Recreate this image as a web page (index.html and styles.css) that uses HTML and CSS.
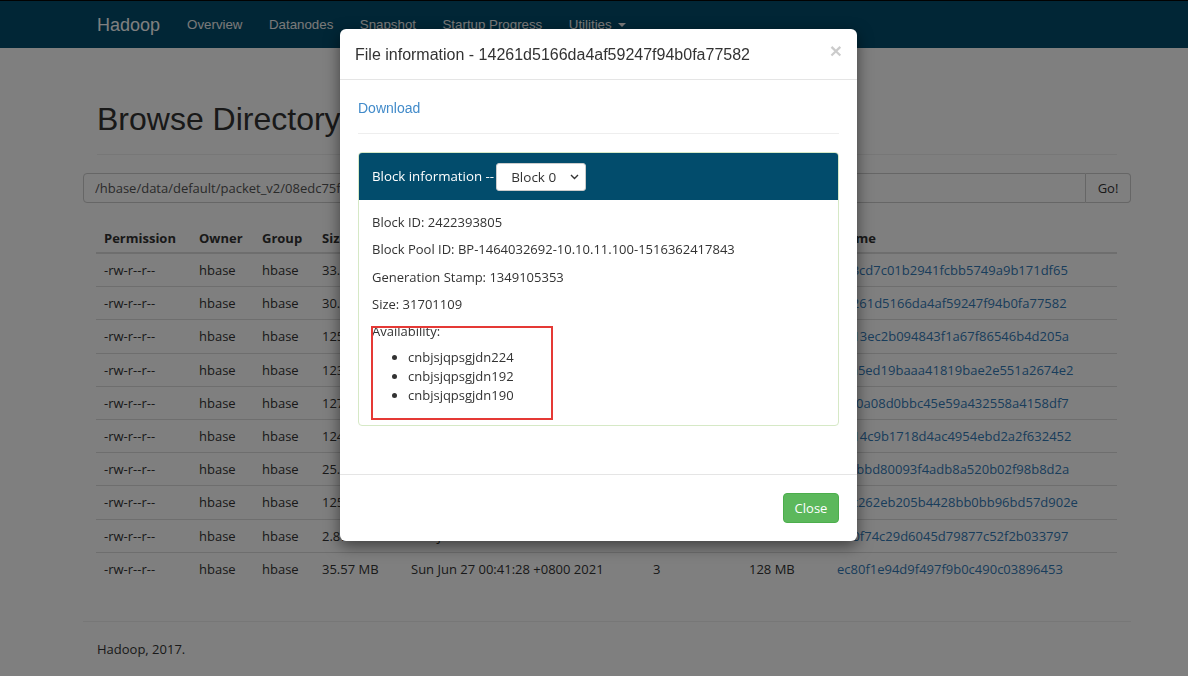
FILE: index.html
```html
<!DOCTYPE html>
<html lang="en">
<head>
<meta charset="utf-8">
<title>Browsing HDFS</title>
<link rel="stylesheet" href="styles.css">
</head>
<body>
<nav class="navbar">
  <div class="nav-inner">
    <a class="brand" href="#">Hadoop</a>
    <ul class="nav-links">
      <li><a href="#">Overview</a></li>
      <li><a href="#">Datanodes</a></li>
      <li><a href="#">Snapshot</a></li>
      <li><a href="#">Startup Progress</a></li>
      <li><a href="#">Utilities <span class="caret"></span></a></li>
    </ul>
  </div>
</nav>

<main class="container">
  <div class="page-header">
    <h1>Browse Directory</h1>
  </div>

  <form class="input-group">
    <input class="path-input" type="text" value="/hbase/data/default/packet_v2/08edc75f3a1d2b4c/d">
    <button class="go-btn" type="button">Go!</button>
  </form>

  <table class="listing">
    <colgroup>
      <col class="c-perm"><col class="c-owner"><col class="c-group"><col class="c-size">
      <col class="c-date"><col class="c-repl"><col class="c-bsize"><col class="c-name">
    </colgroup>
    <thead>
      <tr><th>Permission</th><th>Owner</th><th>Group</th><th>Size</th><th>Last Modified</th><th>Replication</th><th>Block Size</th><th>Name</th></tr>
    </thead>
    <tbody>
      <tr><td>-rw-r--r--</td><td>hbase</td><td>hbase</td><td>33.21 MB</td><td>Sun Jun 27 00:40:12 +0800 2021</td><td>3</td><td>128 MB</td><td><a href="#">0a3cd7c01b2941fcbb5749a9b171df65</a></td></tr>
      <tr><td>-rw-r--r--</td><td>hbase</td><td>hbase</td><td>30.23 MB</td><td>Sun Jun 27 00:40:19 +0800 2021</td><td>3</td><td>128 MB</td><td><a href="#">14261d5166da4af59247f94b0fa77582</a></td></tr>
      <tr><td>-rw-r--r--</td><td>hbase</td><td>hbase</td><td>125.43 MB</td><td>Sun Jun 27 00:40:33 +0800 2021</td><td>3</td><td>128 MB</td><td><a href="#">7b13ec2b094843f1a67f86546b4d205a</a></td></tr>
      <tr><td>-rw-r--r--</td><td>hbase</td><td>hbase</td><td>123.8 MB</td><td>Sun Jun 27 00:40:41 +0800 2021</td><td>3</td><td>128 MB</td><td><a href="#">c8a5ed19baaa41819bae2e551a2674e2</a></td></tr>
      <tr><td>-rw-r--r--</td><td>hbase</td><td>hbase</td><td>127.12 MB</td><td>Sun Jun 27 00:40:52 +0800 2021</td><td>3</td><td>128 MB</td><td><a href="#">e9f0a08d0bbc45e59a432558a4158df7</a></td></tr>
      <tr><td>-rw-r--r--</td><td>hbase</td><td>hbase</td><td>124.6 MB</td><td>Sun Jun 27 00:41:01 +0800 2021</td><td>3</td><td>128 MB</td><td><a href="#">3d14c9b1718d4ac4954ebd2a2f632452</a></td></tr>
      <tr><td>-rw-r--r--</td><td>hbase</td><td>hbase</td><td>25.34 MB</td><td>Sun Jun 27 00:41:08 +0800 2021</td><td>3</td><td>128 MB</td><td><a href="#">6f2bbd80093f4adb8a520b02f98b8d2a</a></td></tr>
      <tr><td>-rw-r--r--</td><td>hbase</td><td>hbase</td><td>125.9 MB</td><td>Sun Jun 27 00:41:15 +0800 2021</td><td>3</td><td>128 MB</td><td><a href="#">a1c262eb205b4428bb0bb96bd57d902e</a></td></tr>
      <tr><td>-rw-r--r--</td><td>hbase</td><td>hbase</td><td>2.87 MB</td><td>Sun Jun 27 00:41:21 +0800 2021</td><td>3</td><td>128 MB</td><td><a href="#">5b0f74c29d6045d79877c52f2b033797</a></td></tr>
      <tr><td>-rw-r--r--</td><td>hbase</td><td>hbase</td><td>35.57 MB</td><td>Sun Jun 27 00:41:28 +0800 2021</td><td>3</td><td>128 MB</td><td><a href="#">ec80f1e94d9f497f9b0c490c03896453</a></td></tr>
    </tbody>
  </table>

  <footer class="footer">
    <p>Hadoop, 2017.</p>
  </footer>
</main>

<div class="backdrop"></div>

<div class="modal">
  <div class="modal-header">
    <span class="close">&times;</span>
    <h4 class="modal-title">File information - 14261d5166da4af59247f94b0fa77582</h4>
  </div>
  <div class="modal-body">
    <a class="download" href="#">Download</a>
    <hr class="sep">
    <div class="panel">
      <div class="panel-heading">
        <span class="panel-title">Block information --</span>
        <span class="block-select">Block 0
          <svg class="chev" width="9" height="6" viewBox="0 0 9 6"><polyline points="1,1 4.5,4.5 8,1" fill="none" stroke="#333" stroke-width="1.4"/></svg>
        </span>
      </div>
      <div class="panel-body">
        <p>Block ID: 2422393805</p>
        <p>Block Pool ID: BP-1464032692-10.10.11.100-1516362417843</p>
        <p>Generation Stamp: 1349105353</p>
        <p>Size: 31701109</p>
        <p class="avail">Availability:</p>
        <ul class="nodes">
          <li>cnbjsjqpsgjdn224</li>
          <li>cnbjsjqpsgjdn192</li>
          <li>cnbjsjqpsgjdn190</li>
        </ul>
        <div class="highlight"></div>
      </div>
    </div>
  </div>
  <div class="modal-footer">
    <button class="btn-close" type="button">Close</button>
  </div>
</div>
</body>
</html>
```

FILE: styles.css
```css
* { box-sizing: border-box; }

html, body {
  margin: 0;
  padding: 0;
  background: #fff;
  color: #333;
  font-family: "Open Sans", "Noto Sans", sans-serif;
  font-size: 13px;
}

a { color: #337ab7; text-decoration: none; }

/* navbar */
.navbar {
  height: 48px;
  background: #024c6c;
  border-top: 1px solid #050505;
}
.nav-inner {
  margin-left: 83px;
  width: 1048px;
  padding: 0 14px;
  height: 47px;
  display: flex;
  align-items: center;
  gap: 27px;
  font-family: "Liberation Sans", Arial, sans-serif;
}
.brand {
  color: #fff;
  font-size: 18px;
  line-height: 20px;
}
.nav-links {
  list-style: none;
  margin: 0;
  padding: 0;
  display: flex;
  gap: 26.5px;
}
.nav-links a {
  color: #f2f2f2;
  font-size: 13.3px;
  line-height: 20px;
}
.caret {
  display: inline-block;
  width: 0;
  height: 0;
  margin-left: 3px;
  vertical-align: middle;
  border-top: 4px solid #f2f2f2;
  border-left: 4px solid transparent;
  border-right: 4px solid transparent;
}

/* main */
.container {
  margin-left: 83px;
  width: 1048px;
}
.page-header {
  margin: 51px 14px 0;
  padding-bottom: 15px;
  border-bottom: 1px solid #eee;
}
.page-header h1 {
  margin: 0;
  font-family: "Liberation Sans", Arial, sans-serif;
  font-weight: 400;
  font-size: 32px;
  line-height: 40px;
  color: #333;
}

.input-group {
  margin-top: 18px;
  display: flex;
  height: 30px;
}
.path-input {
  flex: 1;
  height: 30px;
  border: 1px solid #ccc;
  border-radius: 4px 0 0 4px;
  padding: 0 11px;
  font-family: "Open Sans", sans-serif;
  font-size: 13px;
  color: #555;
  background: #fff;
}
.go-btn {
  width: 45px;
  height: 30px;
  border: 1px solid #ccc;
  border-left: none;
  border-radius: 0 4px 4px 0;
  background: #fff;
  color: #333;
  font-family: "Open Sans", sans-serif;
  font-size: 13px;
  padding: 0;
}

.listing {
  margin: 17px 0 0 13px;
  width: 1021px;
  border-collapse: collapse;
  table-layout: fixed;
}
.c-perm { width: 95px; }
.c-owner { width: 63px; }
.c-group { width: 60px; }
.c-size { width: 89px; }
.c-date { width: 242px; }
.c-repl { width: 96px; }
.c-bsize { width: 88px; }
.c-name { width: 288px; }
.listing th {
  text-align: left;
  font-weight: 700;
  padding: 10px 8px 6px;
  line-height: 16px;
  border-bottom: 2px solid #ddd;
  white-space: nowrap;
  overflow: hidden;
}
.listing td {
  padding: 8px 8px;
  line-height: 16.2px;
  border-top: 1px solid #ddd;
  white-space: nowrap;
}
.listing tbody tr:first-child td { border-top: none; }

.footer {
  margin-top: 36px;
  border-top: 1px solid #eee;
  padding: 19px 14px;
}
.footer p { margin: 0; line-height: 17px; }

/* backdrop + modal */
.backdrop {
  position: fixed;
  inset: 0;
  background: rgba(0, 0, 0, 0.5);
}
.modal {
  position: fixed;
  left: 340px;
  top: 29px;
  width: 517px;
  background: #fff;
  border-radius: 6px;
  box-shadow: 0 5px 15px rgba(0, 0, 0, 0.5);
}
.modal-header {
  height: 51px;
  padding: 16px 15px 0;
  border-bottom: 1px solid #e5e5e5;
}
.modal-title {
  margin: 0;
  font-family: "Liberation Sans", Arial, sans-serif;
  font-weight: 400;
  font-size: 16px;
  line-height: 20px;
  color: #333;
}
.close {
  float: right;
  margin-top: -4px;
  font-family: "Liberation Sans", Arial, sans-serif;
  font-size: 21px;
  font-weight: 700;
  line-height: 20px;
  color: #000;
  opacity: 0.2;
}
.modal-body {
  padding: 18px 18px 0;
}
.download {
  display: block;
  font-family: "Liberation Sans", Arial, sans-serif;
  font-size: 14px;
  line-height: 20px;
  color: #428bca;
}
.sep {
  margin: 15px 0 18px;
  border: 0;
  border-top: 1px solid #eee;
}
.panel {
  border: 1px solid #d6e9c6;
  border-radius: 4px;
  margin-bottom: 48px;
}
.panel-heading {
  height: 47px;
  background: #024c6c;
  color: #fff;
  padding: 0 13px;
  display: flex;
  align-items: center;
  gap: 2px;
  border-radius: 3px 3px 0 0;
}
.panel-title {
  font-size: 13.3px;
  line-height: 20px;
  margin-top: -2px;
}
.block-select {
  width: 90px;
  height: 28px;
  background: #fff;
  color: #333;
  border: 1px solid #ccc;
  border-radius: 3px;
  display: flex;
  align-items: center;
  justify-content: space-between;
  padding: 0 6px 0 14px;
  font-size: 13.5px;
}
.chev { display: block; }
.panel-body {
  position: relative;
  padding: 14px 13px 13px;
}
.panel-body p {
  margin: 0 0 10.3px;
  line-height: 17px;
}
.panel-body p.avail { margin-bottom: 8px; }
.nodes {
  margin: 0 0 7px;
  padding-left: 36px;
}
.nodes li { line-height: 19px; }
.highlight {
  position: absolute;
  left: 12px;
  top: 126px;
  width: 182px;
  height: 94px;
  border: 2px solid #e53935;
}
.modal-footer {
  border-top: 1px solid #e5e5e5;
  padding: 18px 18px 18px;
  display: flex;
  justify-content: flex-end;
}
.btn-close {
  width: 56px;
  height: 30px;
  background: #5cb85c;
  border: 1px solid #4cae4c;
  border-radius: 4px;
  color: #fff;
  font-family: "Open Sans", sans-serif;
  font-size: 13px;
  padding: 0;
}
```
